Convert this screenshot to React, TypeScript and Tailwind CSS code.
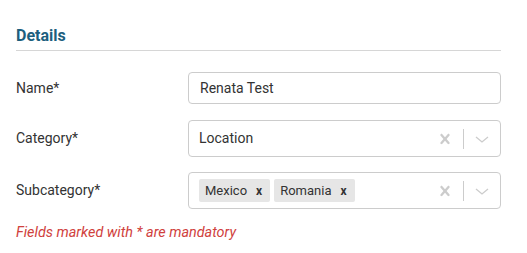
const ClearIcon = () => (
  <svg width="20" height="20" viewBox="0 0 20 20" className="fill-[#cccccc]">
    <path d="M14.348 14.849c-0.469 0.469-1.229 0.469-1.697 0l-2.651-3.030-2.651 3.029c-0.469 0.469-1.229 0.469-1.697 0-0.469-0.469-0.469-1.229 0-1.697l2.758-3.15-2.759-3.152c-0.469-0.469-0.469-1.228 0-1.697s1.228-0.469 1.697 0l2.652 3.031 2.651-3.031c0.469-0.469 1.228-0.469 1.697 0s0.469 1.229 0 1.697l-2.758 3.152 2.758 3.15c0.469 0.469 0.469 1.229 0 1.698z" />
  </svg>
)

const ChevronIcon = () => (
  <svg width="20" height="20" viewBox="0 0 20 20" fill="none" stroke="#cccccc" strokeWidth="1.3">
    <path d="M4 8l6 5 6-5" />
  </svg>
)

const Chip = ({ label }: { label: string }) => (
  <div className="flex items-center h-[23px] bg-[#e6e6e6] rounded-[2px] pl-[6px] pr-[8px] mr-[4px] text-[13px] text-[#333]">
    <span>{label}</span>
    <span className="ml-[9px] font-bold text-[12px] text-[#333]">x</span>
  </div>
)

const Indicators = () => (
  <div className="flex items-center h-full">
    <div className="w-[36px] flex justify-center">
      <ClearIcon />
    </div>
    <div className="w-px h-[20px] bg-[#cccccc]" />
    <div className="w-[36px] flex justify-center">
      <ChevronIcon />
    </div>
  </div>
)

export default function App() {
  return (
    <div className="w-[527px] h-[253px] bg-white font-['Roboto',sans-serif] text-[#333] px-[16px] pt-[24px]">
      <div className="w-[485px]">
        <h2 className="text-[16px] leading-[24px] font-bold text-[#1d5f7e] pb-[1px]">Details</h2>
        <div className="h-px bg-[#d6d6d6] mt-[1px]" />

        <div className="flex items-center mt-[21px]">
          <label className="w-[172px] text-[14px]">Name*</label>
          <div className="flex-1 h-[32px] border border-[#cccccc] rounded-[4px] flex items-center px-[11px] text-[14px]">
            Renata Test
          </div>
        </div>

        <div className="flex items-center mt-[16px]">
          <label className="w-[172px] text-[14px]">Category*</label>
          <div className="flex-1 h-[37px] border border-[#cccccc] rounded-[4px] flex items-center pl-[10px] text-[14px]">
            <span className="flex-1">Location</span>
            <Indicators />
          </div>
        </div>

        <div className="flex items-center mt-[15px]">
          <label className="w-[172px] text-[14px]">Subcategory*</label>
          <div className="flex-1 h-[37px] border border-[#cccccc] rounded-[4px] flex items-center pl-[10px] text-[14px]">
            <div className="flex-1 flex items-center">
              <Chip label="Mexico" />
              <Chip label="Romania" />
            </div>
            <Indicators />
          </div>
        </div>

        <p className="mt-[13px] text-[14.4px] italic text-[#d0413d]">Fields marked with * are mandatory</p>
      </div>
    </div>
  )
}
